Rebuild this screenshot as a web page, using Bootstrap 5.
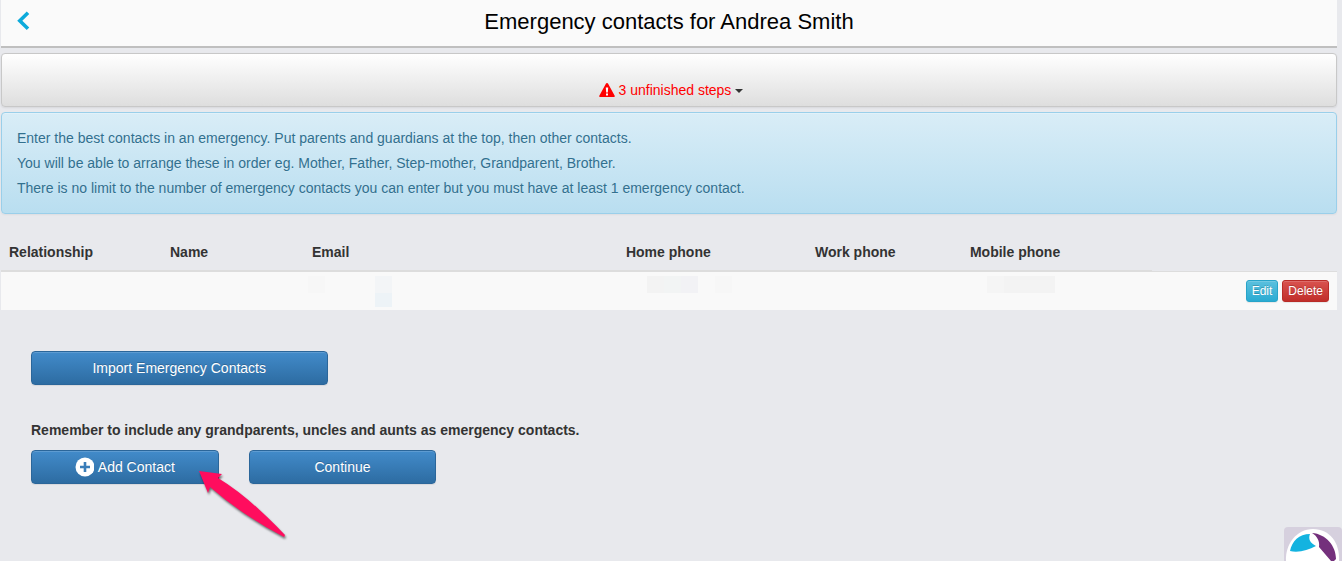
<!DOCTYPE html>
<html lang="en">
<head>
<meta charset="utf-8">
<meta name="viewport" content="width=device-width, initial-scale=1">
<title>Emergency contacts for Andrea Smith</title>
<link href="https://cdn.jsdelivr.net/npm/bootstrap@5.3.0/dist/css/bootstrap.min.css" rel="stylesheet">
<style>
  body {
    background: #e8e9ed;
    color: #333;
    font: 14px/20px "Liberation Sans", Arial, sans-serif;
    padding: 0 5px 0 1px;
  }
  .topbar { background: #fafafa; border-bottom: 2px solid #bfbfbf; height: 48px; padding-bottom: 2px; }
  .topbar h1 { font-size: 22px; line-height: 24px; color: #000; }
  .back-link { left: 15px; top: 11px; line-height: 0; }
  .steps-panel {
    height: 54px;
    margin-top: 5px;
    padding: 0 0 6px 4px;
    border: 1px solid #c8c8c8;
    border-radius: 4px;
    background: linear-gradient(#fff, #dedede);
    box-shadow: 0 1px 2px rgba(0, 0, 0, .08);
  }
  .steps-toggle { color: #333; font-size: 14px; line-height: 20px; }
  .steps-label { color: #f00; }
  .steps-toggle::after { margin-left: 4px; border-width: 4px 4px 0; vertical-align: middle; }
  .info-box {
    margin: 5px 0 0;
    padding: 13px 15px 12px;
    border: 1px solid #9acfea;
    border-radius: 4px;
    background: linear-gradient(#d9edf7, #b9def0);
    box-shadow: inset 0 1px 0 rgba(255, 255, 255, .25), 0 1px 2px rgba(0, 0, 0, .05);
    color: #31708f;
    line-height: 25px;
    text-shadow: 0 1px 0 rgba(255, 255, 255, .2);
  }
  .contacts { table-layout: fixed; margin: 20px 0 0; --bs-table-bg: transparent; color: #333; }
  .contacts > thead th { padding: 7px 8px 8px; height: 37px; border-bottom: 2px solid #ddd; vertical-align: middle; }
  .contacts > thead td { border-bottom: 1px solid #ddd; }
  .contacts > tbody td { height: 39px; padding: 3px 8px 0; border: 0; background: #f9f9f9; vertical-align: top; line-height: 0; }
  .contacts > tbody td.row-tools { padding-top: 8px; }
  .btn-row { height: 22px; padding: 0 5px; border-radius: 3px; font-size: 12px; line-height: 18px; color: #fff; box-shadow: inset 0 1px 0 rgba(255, 255, 255, .15), 0 1px 1px rgba(0, 0, 0, .075); text-shadow: 0 -1px 0 rgba(0, 0, 0, .2); }
  .btn-edit { background: linear-gradient(#5bc0de, #2aabd2); border-color: #28a4c9; }
  .btn-delete { background: linear-gradient(#d9534f, #c12e2a); border-color: #b92c28; }
  .actions { padding: 0 15px 70px; }
  .actions .row { --bs-gutter-x: 30px; margin: 0; }
  .actions .import-row { padding-top: 41px; }
  .actions .remember { margin: 35px 0 10px; }
  .btn-action {
    height: 34px;
    padding: 0 12px;
    border: 1px solid #2b669a;
    border-radius: 4px;
    background: linear-gradient(#428bca, #2d6ca2);
    box-shadow: inset 0 1px 0 rgba(255, 255, 255, .15), 0 1px 1px rgba(0, 0, 0, .075);
    color: #fff;
    font-size: 14px;
    text-shadow: 0 -1px 0 rgba(0, 0, 0, .2);
  }
  .pointer { left: 164px; top: 16px; pointer-events: none; z-index: 2; filter: drop-shadow(1px 2px 1px rgba(0, 0, 0, .55)); }
  .helper { right: 0; bottom: 0; line-height: 0; }
</style>
</head>
<body>
<header class="topbar position-relative d-flex align-items-center justify-content-center">
  <a href="#" class="back-link position-absolute" aria-label="Back">
    <svg width="14" height="20" viewBox="0 0 14 20"><path d="M12 1.800 3.800 9.800l8.200 8" fill="none" stroke="#0caadb" stroke-width="3.600"/></svg>
  </a>
  <h1 class="m-0 fw-normal">Emergency contacts for Andrea Smith</h1>
</header>

<div class="steps-panel d-flex align-items-end justify-content-center">
  <button type="button" class="steps-toggle dropdown-toggle btn border-0 p-0" data-bs-toggle="dropdown"><svg class="align-text-bottom" width="16" height="16" viewBox="0 0 16 16"><path fill="#f00" d="M8 1c.5 0 .8.2 1 .6l6.700 12.100c.4.7 0 1.300-.8 1.300H1.100c-.8 0-1.200-.6-.8-1.300L7 1.600c.2-.4.5-.6 1-.6Z"/><path fill="#fff" d="M6.800 5.500h2.400l-.4 5H7.200zM7 11.500h2v2H7z"/></svg> <span class="steps-label">3 unfinished steps</span></button>
</div>

<div class="info-box">
  Enter the best contacts in an emergency. Put parents and guardians at the top, then other contacts.<br>
  You will be able to arrange these in order eg. Mother, Father, Step-mother, Grandparent, Brother.<br>
  There is no limit to the number of emergency contacts you can enter but you must have at least 1 emergency contact.
</div>

<table class="table contacts">
  <colgroup>
    <col style="width:12.050%"><col style="width:10.630%"><col style="width:23.500%"><col style="width:14.150%"><col style="width:11.600%"><col style="width:14.220%"><col>
  </colgroup>
  <thead>
    <tr><th>Relationship</th><th>Name</th><th>Email</th><th>Home phone</th><th>Work phone</th><th>Mobile phone</th><td></td></tr>
  </thead>
  <tbody>
    <tr>
      <td></td>
      <td></td>
      <td><svg width="90" height="34" viewBox="0 0 90 34" overflow="visible"><path fill="#f7f7f7" d="M-4 1h17v17H-4z"/><path fill="#f3f5f7" d="M63 1h17v17H63z"/><path fill="#edf3f7" d="M63 18h17v14H63z"/></svg></td>
      <td><svg width="110" height="34" viewBox="0 0 110 34"><path fill="#f3f3f3" d="M21 1h17v17H21z"/><path fill="#f2f4f4" d="M38 1h17v17H38z"/><path fill="#f2f2f5" d="M55 1h17v17H55z"/><path fill="#f7f7f7" d="M89 1h17v17H89z"/></svg></td>
      <td></td>
      <td><svg width="90" height="34" viewBox="0 0 90 34"><path fill="#f5f5f5" d="M17 1h17v17H17z"/><path fill="#f3f3f3" d="M34 1h51v17H34z"/></svg></td>
      <td class="row-tools"><div class="d-flex justify-content-end gap-1"><button type="button" class="btn btn-row btn-edit">Edit</button><button type="button" class="btn btn-row btn-delete">Delete</button></div></td>
    </tr>
  </tbody>
</table>

<main class="actions">
  <div class="row import-row">
    <div class="col-3"><button type="button" class="btn btn-action w-100">Import Emergency Contacts</button></div>
  </div>
  <div class="row">
    <p class="col-12 fw-bold remember">Remember to include any grandparents, uncles and aunts as emergency contacts.</p>
  </div>
  <div class="row">
    <div class="col-2 position-relative">
      <button type="button" class="btn btn-action w-100 d-flex align-items-center justify-content-center"><svg class="me-1" width="19" height="21" viewBox="0 0 19 21" aria-hidden="true"><circle cx="10" cy="10" r="9.500" fill="#fff"/><path d="M10 5v10M5 10h10" stroke="#3a7db9" stroke-width="2.600"/></svg>Add Contact</button>
      <svg class="pointer position-absolute" width="116" height="80" viewBox="0 0 116 80" aria-hidden="true">
        <path fill="#ff0d5e" d="M19 5L42 8L38 12Q68 30 105 69L104 71Q62 49 30 21L28 27Z"/>
      </svg>
    </div>
    <div class="col-2"><button type="button" class="btn btn-action w-100">Continue</button></div>
  </div>
</main>

<a href="#" class="helper position-fixed" aria-label="Support">
  <svg width="58" height="34" viewBox="0 0 58 34">
    <path fill="#d6d0de" d="M0 34V4q0-4 4-4h50q4 0 4 4v30z"/>
    <path fill="#fff" d="M2 34C1 18 12 2 29 2s27 14 26 32z"/>
    <path fill="#13b3e0" d="M6 24C8 14 15 7 26 7c-2 5 0 9 6 12-8 4-17 7-26 5Z"/>
    <path fill="#74307c" d="M28 6c14 1 24 13 24 26l-2 2h-3L35 20c1-6-2-11-7-14Z"/>
  </svg>
</a>
<script src="https://cdn.jsdelivr.net/npm/bootstrap@5.3.0/dist/js/bootstrap.bundle.min.js"></script>
</body>
</html>
